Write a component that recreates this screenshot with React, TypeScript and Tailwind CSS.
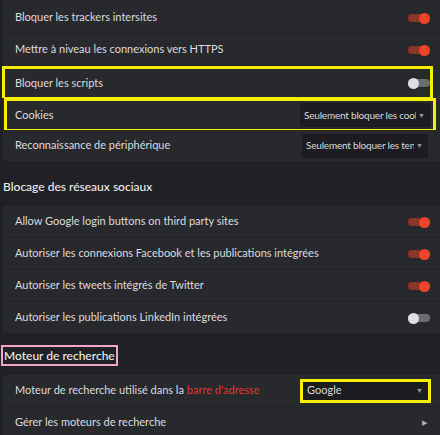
import React from 'react';

function Toggle({ on }: { on: boolean }) {
  return (
    <div className="relative w-[22px] h-[12px] flex items-center shrink-0">
      <div className={`w-[22px] h-[8px] rounded-full ${on ? 'bg-[#8c3527]' : 'bg-[#6b6c70]'}`} />
      <div
        className={`absolute top-[1px] w-[11px] h-[11px] rounded-full ${
          on ? 'right-0 bg-[#f0432b]' : 'left-0 bg-[#dedfe2]'
        }`}
      />
    </div>
  );
}

function Select({ label, width, highlight, extra }: { label: string; width: string; highlight?: boolean; extra?: string }) {
  return (
    <div
      className={`${width} ${extra || ''} shrink-0 h-[24px] flex items-center bg-[#1c1d20] pl-[4px] pr-[5px] ${
        highlight ? 'border-[3px] border-[#f6f000]' : ''
      }`}
    >
      <span
        className={`flex-1 min-w-0 overflow-hidden whitespace-nowrap text-[#d9d9dc] ${
          highlight ? 'text-[11px]' : 'text-[10px] tracking-[-0.2px]'
        }`}
      >
        {label}
      </span>
      <span className="shrink-0 text-[7px] text-[#9a9aa0] ml-[2px]">▼</span>
    </div>
  );
}

function Row({ children, right, box }: { children: React.ReactNode; right?: React.ReactNode; box?: string }) {
  return (
    <div
      className={`h-[32px] flex items-center justify-between border-b border-[#202125] ${
        box || 'pl-[12px] pr-[10px]'
      }`}
    >
      <span className="text-[11px] text-[#dcdcdf] whitespace-nowrap">{children}</span>
      {right}
    </div>
  );
}

export default function App() {
  return (
    <div
      className="w-[440px] h-[435px] overflow-hidden bg-[#1f2125]"
      style={{ fontFamily: 'Lato, "Noto Sans", sans-serif' }}
    >
      {/* Trackers */}
      <div className="ml-[3px] bg-[#28292d] pt-[2px]">
        <Row right={<Toggle on />}>Bloquer les trackers intersites</Row>
        <Row right={<Toggle on />}>Mettre à niveau les connexions vers HTTPS</Row>
        <Row box="border-[3px] border-[#f6f000] -ml-[1px] mr-[7px] pl-[10px] pr-0" right={<Toggle on={false} />}>
          Bloquer les scripts
        </Row>
        <Row
          box="border-[3px] border-[#f6f000] ml-[1px] mr-[4px] pl-[8px] pr-[3px]"
          right={<Select label="Seulement bloquer les cookie" width="w-[130px]" />}
        >
          Cookies
        </Row>
        <Row right={<Select label="Seulement bloquer les tentat" width="w-[126px]" extra="mr-[2px]" />}>
          Reconnaissance de périphérique
        </Row>
      </div>

      {/* Social */}
      <div className="h-[44px] flex items-center pl-[3px] pt-[5px]">
        <span className="text-[12px] font-medium text-[#ececee]">Blocage des réseaux sociaux</span>
      </div>
      <div className="ml-[3px] bg-[#28292d]">
        <Row right={<Toggle on />}>Allow Google login buttons on third party sites</Row>
        <Row right={<Toggle on />}>Autoriser les connexions Facebook et les publications intégrées</Row>
        <Row right={<Toggle on />}>Autoriser les tweets intégrés de Twitter</Row>
        <Row right={<Toggle on={false} />}>Autoriser les publications LinkedIn intégrées</Row>
      </div>

      {/* Search */}
      <div className="h-[41px] flex items-center pl-[1px] pt-[2px]">
        <span className="text-[12px] font-medium text-[#ececee] border-[2px] border-[#f5a3c7] px-[1px] leading-[17px]">
          Moteur de recherche
        </span>
      </div>
      <div className="ml-[3px] bg-[#28292d]">
        <Row right={<Select label="Google" width="w-[131px]" highlight extra="-mr-[1px]" />}>
          Moteur de recherche utilisé dans la <span className="text-[#e3362c]">barre d'adresse</span>
        </Row>
        <Row right={<span className="text-[7px] text-[#b0b0b4] mr-[3px]">▶</span>}>Gérer les moteurs de recherche</Row>
      </div>
    </div>
  );
}
